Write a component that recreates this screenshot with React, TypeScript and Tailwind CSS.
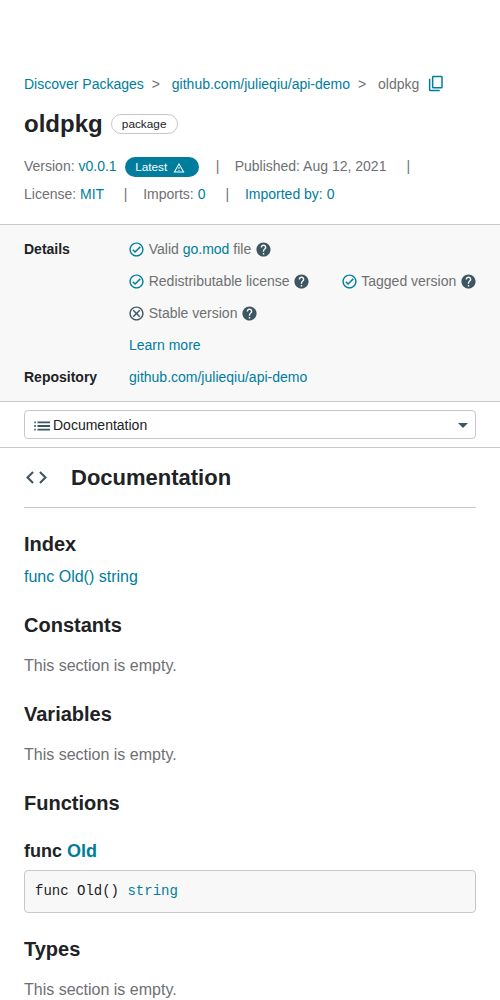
import React from "react";

type IconProps = { d: string; className: string };
const Icon = ({ d, className }: IconProps) => (
  <svg viewBox="0 0 24 24" fill="currentColor" className={`shrink-0 ${className}`}>
    <path d={d} />
  </svg>
);

const COPY =
  "M19 1H8.500c-1.1 0-2 .9-2 2v13c0 1.100.9 2 2 2H19c1.1 0 2-.9 2-2V3c0-1.100-.9-2-2-2zm0 15H8.500V3H19v13zM2.500 5v14.500c0 1.100.9 2 2 2H17v-2H4.500V5z";
const CHECK =
  "M12 2C6.48 2 2 6.48 2 12s4.48 10 10 10 10-4.48 10-10S17.52 2 12 2zm0 18c-4.41 0-8-3.59-8-8s3.59-8 8-8 8 3.59 8 8-3.59 8-8 8zm4.59-12.42L10 14.17l-2.59-2.58L6 13l4 4 8-8z";
const CROSS =
  "M15.900 6.700L12 10.590 8.100 6.700 6.700 8.100 10.590 12 6.700 15.900 8.100 17.300 12 13.410 15.900 17.300 17.300 15.900 13.410 12 17.300 8.100zM12 2C6.47 2 2 6.47 2 12s4.47 10 10 10 10-4.47 10-10S17.53 2 12 2zm0 18c-4.41 0-8-3.59-8-8s3.59-8 8-8 8 3.59 8 8-3.59 8-8 8z";
const HELP =
  "M12 2C6.48 2 2 6.48 2 12s4.48 10 10 10 10-4.48 10-10S17.52 2 12 2zm1 17h-2v-2h2v2zm2.07-7.75l-.9.92C13.45 12.9 13 13.5 13 15h-2v-.5c0-1.1.45-2.1 1.17-2.83l1.24-1.26c.37-.36.59-.86.59-1.41 0-1.1-.9-2-2-2s-2 .9-2 2H8c0-2.21 1.79-4 4-4s4 1.79 4 4c0 .88-.36 1.68-.93 2.25z";
const CODE =
  "M9.4 16.6L4.8 12l4.6-4.6L8 6l-6 6 6 6 1.4-1.4zm5.2 0l4.6-4.6-4.6-4.6L16 6l6 6-6 6-1.4-1.4z";
const WARN =
  "M12 5.99L19.53 19H4.47L12 5.99M12 2L1 21h22L12 2zm1 14h-2v2h2v-2zm0-6h-2v4h2v-4z";

const Link = ({ children, className = "" }: { children: React.ReactNode; className?: string }) => (
  <a className={`text-[#007d9c] ${className}`}>{children}</a>
);

const Check = ({ ok = true, children }: { ok?: boolean; children: React.ReactNode }) => (
  <span className="flex h-8 items-center whitespace-nowrap">
    <Icon d={ok ? CHECK : CROSS} className={`mr-[3.5px] -ml-[0.8px] size-[17px] ${ok ? "text-[#007d9c]" : "text-[#3e5661]"}`} />
    <span>{children}</span>
    <Icon d={HELP} className="ml-[3.5px] size-[17px] text-[#3e5661]" />
  </span>
);

const Section = ({ title }: { title: string }) => (
  <section>
    <h3 className="flex h-8 items-center text-xl font-bold text-[#202224]">{title}</h3>
    <p className="mt-[13px] mb-5 h-6 leading-6">This section is empty.</p>
  </section>
);

export default function App() {
  return (
    <main className="h-[1000px] overflow-hidden bg-white font-['Liberation_Sans',Arial,sans-serif] text-base text-[#6e7072]">
      <header className="h-56 px-6 pt-[68px] text-sm">
        <nav className="flex h-8 items-center whitespace-nowrap">
          <Link>Discover Packages</Link>
          <span className="ml-2 w-5">&gt;</span>
          <Link>github.com/julieqiu/api-demo</Link>
          <span className="ml-2 w-5">&gt;</span>
          <span>oldpkg</span>
          <Icon d={COPY} className="ml-[7.5px] size-[18px] text-[#007d9c]" />
        </nav>
        <div className="mt-2 flex h-8 items-center">
          <h1 className="text-2xl font-bold text-[#202224]">oldpkg</h1>
          <span className="ml-2 flex h-5 w-[67px] items-center justify-center rounded-full border border-[#c6c8ca] text-[11.8px] text-[#202224]">package</span>
        </div>
        <div className="mt-3 flex h-7 items-center whitespace-nowrap">
          <span>Version: <Link>v0.0.1</Link></span>
          <span className="relative top-px ml-2 flex h-5 w-[74px] items-center rounded-full bg-[#007d9c] pl-[10.5px] text-[11.8px] text-white">
            Latest
            <Icon d={WARN} className="relative top-[0.5px] ml-[5.5px] size-3" />
          </span>
          <span className="ml-[17px] w-[19px]">|</span>
          <span>Published: Aug 12, 2021</span>
          <span className="ml-5">|</span>
        </div>
        <div className="flex h-7 items-center whitespace-nowrap">
          <span>License: <Link>MIT</Link></span>
          <span className="ml-[19.500px] w-[19.500px]">|</span>
          <span>Imports: <Link>0</Link></span>
          <span className="ml-5 w-[19.500px]">|</span>
          <Link>Imported by: 0</Link>
        </div>
      </header>

      <section className="flex h-[178px] border-y border-[#c6c8ca] bg-[#f8f8f8] px-6 pt-2 text-sm">
        <div className="w-[105px] shrink-0 font-bold text-[#202224]">
          <h2 className="flex h-8 items-center">Details</h2>
          <h2 className="mt-24 flex h-8 items-center">Repository</h2>
        </div>
        <div>
          <Check>Valid <Link>go.mod</Link> file</Check>
          <div className="flex gap-[31.5px]">
            <Check>Redistributable license</Check>
            <Check>Tagged version</Check>
          </div>
          <Check ok={false}>Stable version</Check>
          <Link className="flex h-8 items-center">Learn more</Link>
          <Link className="flex h-8 items-center">github.com/julieqiu/api-demo</Link>
        </div>
      </section>

      <div className="flex h-[46px] items-start border-b border-[#c6c8ca] px-6 pt-2">
        <div className="flex h-[29px] w-full items-center rounded border border-[#c6c8ca] pr-[7px] pl-[9px] text-sm text-[#202224]">
          <svg viewBox="0 0 16 10" className="mt-0.5 mr-[3px] h-[10px] w-4 fill-[#3e5661]">
            <path d="M3.500 .6h12.500v1.700H3.500zM3.500 4.100h12.500v1.800H3.500zM3.500 7.700h12.500v1.700H3.500zM.3.600h1.500v1.700H.3zM.3 4.100h1.500v1.800H.3zM.3 7.700h1.500v1.700H.3z" />
          </svg>
          Documentation
          <svg viewBox="0 0 10 5" className="mt-px ml-auto h-[5px] w-[10px] fill-[#3e5661]">
            <path d="M0 0h10L5 5z" />
          </svg>
        </div>
      </div>

      <div className="px-6">
        <h2 className="flex h-[60px] items-center border-b border-[#c6c8ca] text-[22px] font-bold text-[#202224]">
          <Icon d={CODE} className="mr-[22px] size-[25px] text-[#3e5661]" />
          Documentation
        </h2>
        <h3 className="mt-5 flex h-8 items-center text-xl font-bold text-[#202224]">Index</h3>
        <Link className="mt-[5px] mb-5 block h-6 leading-6">func Old() string</Link>
        <Section title="Constants" />
        <Section title="Variables" />
        <h3 className="flex h-8 items-center text-xl font-bold text-[#202224]">Functions</h3>
        <h4 className="mt-4 flex h-8 items-center text-lg font-bold text-[#202224]">
          <span>func <Link>Old</Link></span>
        </h4>
        <pre className="mt-[3px] mb-5 flex h-[43px] items-center rounded border border-[#c6c8ca] bg-[#f8f8f8] px-[10px] pb-0.5 font-['Liberation_Mono',monospace] text-sm text-[#202224]">
          <span>func Old() <Link>string</Link></span>
        </pre>
        <Section title="Types" />
      </div>
    </main>
  );
}
